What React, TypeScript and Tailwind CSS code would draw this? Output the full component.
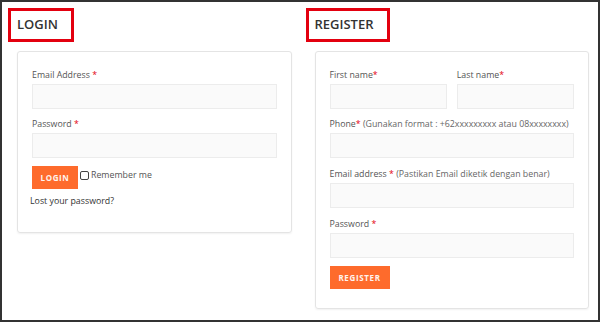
export default function App() {
  return (
    <div className="w-[600px] h-[322px] bg-white border-2 border-[#333] font-['Open_Sans',_sans-serif] text-[#555] overflow-hidden">
      <div className="grid grid-cols-2 gap-[14px] pl-[6px] pr-[9px] pt-[6px]">
        {/* Login column */}
        <div className="flex flex-col">
          <Heading>LOGIN</Heading>
          <div className="ml-[9px] mt-[9px] rounded-[3px] border border-[#e4e4e4] shadow-[0_1px_2px_rgba(0,0,0,0.06)] px-[14px] pt-[17px] pb-[24px]">
            <Field label="Email Address" />
            <Field label="Password" className="mt-[9px]" />
            <div className="mt-[8px] flex items-center gap-[2px]">
              <button className="h-[23px] w-[46px] bg-[#fe6b2c] text-[#fff3ee] text-[8px] font-bold tracking-[0.08em]">
                LOGIN
              </button>
              <label className="flex items-center gap-[2px] text-[8.8px] leading-[13px] text-[#555] -mt-[4px]">
                <input
                  type="checkbox"
                  className="appearance-none w-[9px] h-[9px] border border-[#444] rounded-[2px] bg-white"
                />
                Remember me
              </label>
            </div>
            <div className="mt-[6px] -ml-[2px] text-[8.8px] leading-[13px] text-[#333]">
              Lost your password?
            </div>
          </div>
        </div>

        {/* Register column */}
        <div className="flex flex-col">
          <Heading>REGISTER</Heading>
          <div className="ml-[9px] mt-[9px] rounded-[3px] border border-[#e4e4e4] shadow-[0_1px_2px_rgba(0,0,0,0.06)] px-[14px] pt-[17px] pb-[19px]">
            <div className="grid grid-cols-2 gap-[10px]">
              <Field label="First name" tight />
              <Field label="Last name" tight />
            </div>
            <Field
              label="Phone"
              tight
              hint="(Gunakan format : +62xxxxxxxxx atau 08xxxxxxxx)"
              className="mt-[9px]"
            />
            <Field
              label="Email address"
              hint="(Pastikan Email diketik dengan benar)"
              className="mt-[10px]"
            />
            <Field label="Password" className="mt-[10px]" />
            <button className="mt-[8px] h-[23px] w-[60px] bg-[#fe6b2c] text-[#fff3ee] text-[8px] font-bold tracking-[0.08em]">
              REGISTER
            </button>
          </div>
        </div>
      </div>
    </div>
  );
}

function Heading({ children }: { children: string }) {
  return (
    <div className="self-start h-[34px] border-[3px] border-[#e3000f] pl-[6px] pr-[13px] flex items-center text-[13px] font-semibold text-[#333]">
      {children}
    </div>
  );
}

function Field({
  label,
  hint,
  tight,
  className = "",
}: {
  label: string;
  hint?: string;
  tight?: boolean;
  className?: string;
}) {
  return (
    <div className={className}>
      <div className="text-[8.8px] leading-[13px] text-[#555] whitespace-nowrap">
        {label}
        {tight ? "" : " "}
        <span className="text-[#e3000f]">*</span>
        {hint && <span className="text-[#666]"> {hint}</span>}
      </div>
      <div className="mt-[2px] h-[25px] bg-[#fafafa] border border-[#ececec]" />
    </div>
  );
}
